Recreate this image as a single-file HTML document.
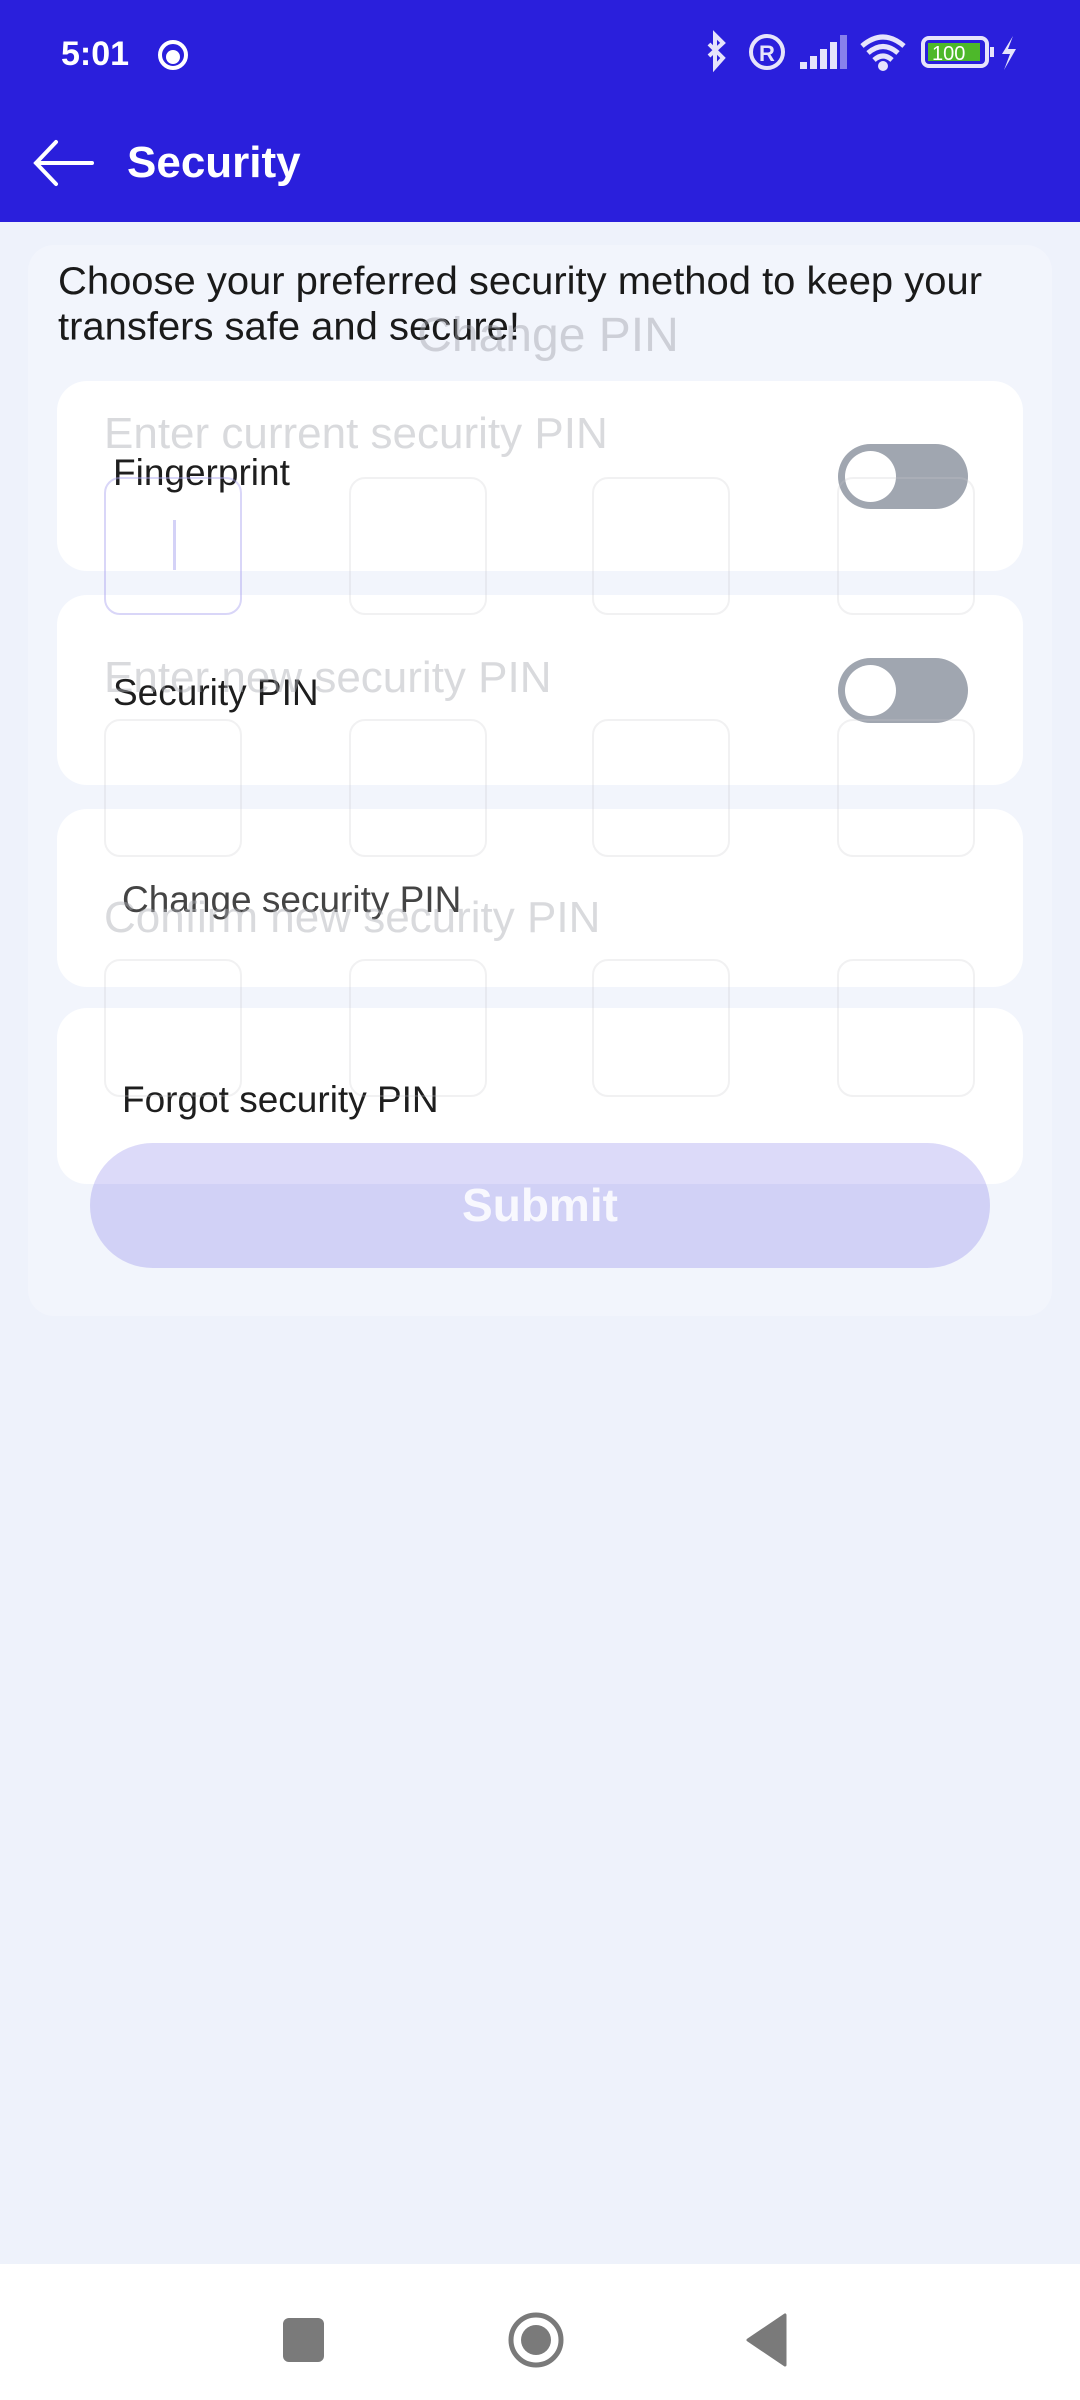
<!DOCTYPE html>
<html><head><meta charset="utf-8"><style>
*{margin:0;padding:0;box-sizing:border-box}
body{width:1080px;height:2400px;position:relative;overflow:hidden;background:#eef2fb;font-family:"Liberation Sans",Roboto,sans-serif}
.a{position:absolute}
.hdr{left:0;top:0;width:1080px;height:222px;background:#2a1fdc}
.card{background:#fff;border-radius:30px;left:57px;width:966px}
.lbl{font-size:37px;color:#1e1e1e;white-space:nowrap;line-height:1}
.tog{left:838px;width:130px;height:65px;border-radius:33px;background:#a0a6b0}
.tog::after{content:"";position:absolute;left:7px;top:7px;width:51px;height:51px;border-radius:50%;background:#fff}
.box{width:138px;height:138px;border:2px solid rgba(200,200,205,0.25);border-radius:16px}
.gh{font-size:44px;color:rgba(170,172,180,0.45);white-space:nowrap;line-height:1}
</style></head><body>
<div class="a hdr"></div>
<div class="a" style="left:61px;top:35px;font-size:34px;color:#fff;font-weight:bold">5:01</div>
<svg class="a" style="left:156px;top:38px" width="34" height="34"><circle cx="17" cy="17" r="13" fill="none" stroke="#fff" stroke-width="4"/><circle cx="17" cy="19" r="7" fill="#fff"/></svg>
<svg class="a" style="left:700px;top:30px" width="330" height="45" fill="none" stroke="#e6e4fb" stroke-width="4">
<path d="M9 14 L23 28 L15 37 L15 5 L23 13 L9 26"/>
<circle cx="67" cy="22" r="16"/><text x="59" y="31" font-size="22" fill="#e6e4fb" stroke="none" font-family="Liberation Sans" font-weight="bold">R</text>
<g fill="#e6e4fb" stroke="none"><rect x="100" y="32" width="7" height="7"/><rect x="110" y="26" width="7" height="13"/><rect x="120" y="19" width="7" height="20"/><rect x="130" y="12" width="7" height="27"/><rect x="140" y="5" width="7" height="34" opacity="0.5"/></g>
<path d="M162 16 Q183 -2 204 16 M168 23 Q183 10 198 23 M174 30 Q183 22 192 30" stroke-width="5"/><circle cx="183" cy="36" r="3" fill="#e6e4fb"/>
<rect x="223" y="8" width="64" height="28" rx="6"/><rect x="228" y="13" width="52" height="18" fill="#4db82a" stroke="none"/><text x="232" y="30" font-size="20" fill="#fff" stroke="none" font-family="Liberation Sans">100</text><rect x="290" y="17" width="4" height="10" fill="#e6e4fb" stroke="none"/>
<path d="M313 6 L302 24 L310 24 L304 40 L316 19 L308 19 Z" fill="#e6e4fb" stroke="none"/>
</svg>
<svg class="a" style="left:32px;top:138px" width="64" height="50" fill="none" stroke="#fff" stroke-width="4" stroke-linecap="round"><path d="M4 25 H60 M24 4 L4 25 L24 46"/></svg>
<div class="a" style="left:127px;top:138px;font-size:44px;color:#fff;font-weight:bold">Security</div>

<div class="a" style="left:28px;top:245px;width:1024px;height:1071px;background:#f2f5fc;border-radius:26px"></div>
<div class="a" style="left:58px;top:258px;font-size:37px;line-height:43px;color:#1a1a1a;width:1000px;white-space:nowrap;transform:scale(1.08,1.06);transform-origin:0 0">Choose your preferred security method to keep your<br>transfers safe and secure!</div>

<div class="a card" style="top:381px;height:190px"></div>
<div class="a card" style="top:595px;height:190px"></div>
<div class="a card" style="top:809px;height:178px"></div>
<div class="a card" style="top:1008px;height:176px"></div>
<div class="a lbl" style="left:113px;top:454px">Fingerprint</div>
<div class="a tog" style="top:444px"></div>
<div class="a lbl" style="left:113px;top:674px">Security PIN</div>
<div class="a tog" style="top:658px"></div>
<div class="a lbl" style="left:122px;top:881px;color:#444">Change security PIN</div>
<div class="a lbl" style="left:122px;top:1081px">Forgot security PIN</div>

<div class="a" style="left:0;top:312px;width:1096px;text-align:center;font-size:48px;color:rgba(160,162,170,0.45);line-height:1">Change PIN</div>
<div class="a gh" style="left:104px;top:412px">Enter current security PIN</div>
<div class="a gh" style="left:104px;top:656px">Enter new security PIN</div>
<div class="a gh" style="left:104px;top:896px">Confirm new security PIN</div>
<div class="a box" style="left:104px;top:477px;border-color:rgba(170,165,240,0.45)"></div>
<div class="a" style="left:173px;top:520px;width:3px;height:50px;background:rgba(170,165,240,0.5)"></div>
<div class="a box" style="left:349px;top:477px"></div><div class="a box" style="left:592px;top:477px"></div><div class="a box" style="left:837px;top:477px"></div>
<div class="a box" style="left:104px;top:719px"></div><div class="a box" style="left:349px;top:719px"></div><div class="a box" style="left:592px;top:719px"></div><div class="a box" style="left:837px;top:719px"></div>
<div class="a box" style="left:104px;top:959px"></div><div class="a box" style="left:349px;top:959px"></div><div class="a box" style="left:592px;top:959px"></div><div class="a box" style="left:837px;top:959px"></div>
<div class="a" style="left:90px;top:1143px;width:900px;height:125px;border-radius:63px;background:rgba(60,50,220,0.18);color:rgba(255,255,255,0.85);font-size:46px;font-weight:bold;text-align:center;line-height:125px">Submit</div>

<div class="a" style="left:0;top:2264px;width:1080px;height:136px;background:#fff"></div>
<div class="a" style="left:283px;top:2318px;width:41px;height:44px;border-radius:6px;background:#7a7a7a"></div>
<svg class="a" style="left:505px;top:2310px" width="62" height="62"><circle cx="31" cy="30" r="25" fill="none" stroke="#7a7a7a" stroke-width="5"/><circle cx="31" cy="30" r="15" fill="#7a7a7a"/></svg>
<svg class="a" style="left:745px;top:2312px" width="45" height="58"><path d="M40 3 L40 53 L3 28 Z" fill="#7a7a7a" stroke="#7a7a7a" stroke-width="3" stroke-linejoin="round"/></svg>
</body></html>
